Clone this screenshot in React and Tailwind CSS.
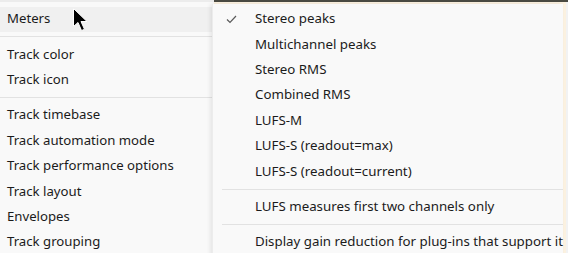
import React from "react";

const font = { fontFamily: '"Noto Sans", "Open Sans", sans-serif' };

function Row({ children, hl }) {
  return (
    <div className={`h-[25.4px] flex items-center pl-[7px] text-[13.2px] text-[#1b1b1b] whitespace-nowrap ${hl ? "bg-[#f0f0f0]" : ""}`}>
      {children}
    </div>
  );
}

function Divider() {
  return (
    <div className="h-[10px] flex items-center">
      <div className="h-px w-full bg-[#e2e2e2]" />
    </div>
  );
}

function SubRow({ children, checked }) {
  return (
    <div className="h-[25.4px] flex items-center text-[13.3px] text-[#1b1b1b] whitespace-nowrap">
      <div className="w-[42px] pl-[13px] flex items-center">
        {checked && (
          <svg width="11" height="9" viewBox="0 0 11 9">
            <path d="M1 4.5 L4 7.5 L10 1" fill="none" stroke="#5a5a5a" strokeWidth="1.2" />
          </svg>
        )}
      </div>
      <span>{children}</span>
    </div>
  );
}

function SubDivider() {
  return (
    <div className="h-[10px] flex items-center pl-[9px]">
      <div className="h-px w-full bg-[#e2e2e2]" />
    </div>
  );
}

export default function App() {
  return (
    <div className="relative w-[568px] h-[253px] overflow-hidden bg-[#f9f9f9]" style={font}>
      <div className="h-[2px] bg-[#ececec]" />
      <div className="w-[212px] pt-[4.5px] flex flex-col">
        <Row hl>Meters</Row>
        <Divider />
        <Row>Track color</Row>
        <Row>Track icon</Row>
        <Divider />
        <Row>Track timebase</Row>
        <Row>Track automation mode</Row>
        <Row>Track performance options</Row>
        <Row>Track layout</Row>
        <Row>Envelopes</Row>
        <Row>Track grouping</Row>
      </div>

      {/* window behind at top */}
      <div className="absolute left-[214px] top-0 w-[354px] h-[2px] bg-[#4a4a42]" />
      <div className="absolute left-[214px] top-[2px] w-[354px] h-[2px] bg-[#fbf1e0]" />
      <div className="absolute right-0 top-[2px] w-[5px] h-[251px] bg-[#fbf1e0]" />
      <div className="absolute right-0 top-[2px] w-[2px] h-[251px] bg-[#f2f2f2]" />

      {/* submenu */}
      <div className="absolute left-[212px] top-[4px] w-[351px] h-[260px] bg-[#f9f9f9] shadow-[-2px_0_4px_rgba(0,0,0,0.08)] border-l border-[#ececec] pt-[2.5px] flex flex-col">
        <SubRow checked>Stereo peaks</SubRow>
        <SubRow>Multichannel peaks</SubRow>
        <SubRow>Stereo RMS</SubRow>
        <SubRow>Combined RMS</SubRow>
        <SubRow>LUFS-M</SubRow>
        <SubRow>LUFS-S (readout=max)</SubRow>
        <SubRow>LUFS-S (readout=current)</SubRow>
        <SubDivider />
        <SubRow>LUFS measures first two channels only</SubRow>
        <SubDivider />
        <SubRow>Display gain reduction for plug-ins that support it</SubRow>
      </div>

      {/* cursor */}
      <svg className="absolute left-[72px] top-[7px]" width="18" height="26" viewBox="0 0 18 26">
        <path d="M1.5 1.5 L1.5 19.5 L6 15.5 L9.5 23.5 L12.5 22.3 L9 14.5 L15 14.5 Z" fill="#000" stroke="#fff" strokeWidth="1" strokeLinejoin="round" />
      </svg>
    </div>
  );
}
